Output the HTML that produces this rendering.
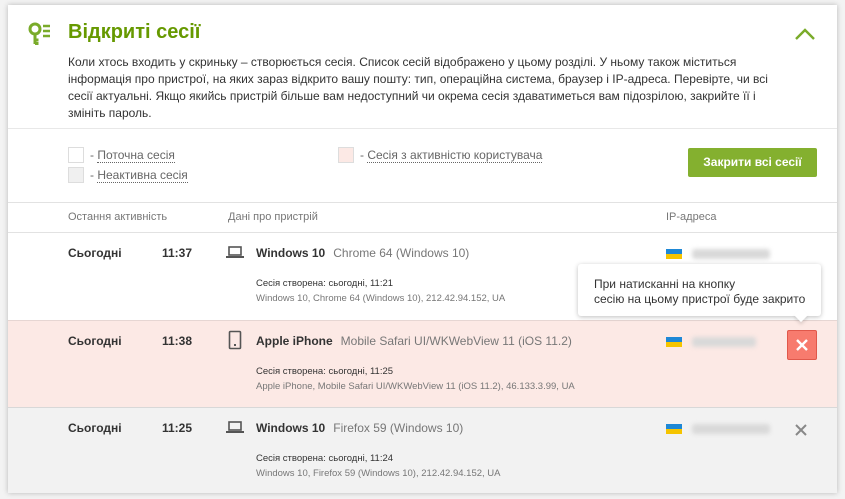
<!DOCTYPE html>
<html><head><meta charset="utf-8"><style>
*{margin:0;padding:0;box-sizing:border-box}
body{width:845px;height:499px;background:#f3f3f3;font-family:"Liberation Sans",Arial,sans-serif;position:relative;overflow:hidden}
.card{position:absolute;left:8px;top:5px;width:829px;height:488px;background:#fff;box-shadow:0 0 5px rgba(0,0,0,.25)}
.a{position:absolute;white-space:nowrap}
.t{font-size:12px;color:#333;line-height:17px}
.row{position:absolute;left:0;width:829px;height:87px}
.dt{font-size:12px;font-weight:bold;color:#333}
.dev{font-size:12px;font-weight:bold;color:#333}
.dev span{font-weight:normal;color:#777;margin-left:8px}
.s1{font-size:9.5px;color:#333}
.s2{font-size:9.5px;color:#777}
.flag{width:16px;height:10px;background:linear-gradient(#1e88d6 50%,#f5c400 50%)}
.ip{width:78px;height:10px;background:#d9d9d9;filter:blur(2px);border-radius:3px}
.leg{font-size:12px;color:#666}
.leg u{text-decoration:none;border-bottom:1px dotted #666}
.box{width:16px;height:16px;border:1px solid #ddd}
</style></head><body>
<div class="card">
<svg class="a" style="left:18px;top:16px" width="28" height="28" viewBox="0 0 28 28"><circle cx="9" cy="8" r="5" fill="none" stroke="#7aab2a" stroke-width="3"/><path d="M9 13v10M9 19h3.5M9 22.5h3.5" stroke="#7aab2a" stroke-width="3" fill="none"/><path d="M17 5h7M17 10h7M17 15h7" stroke="#7aab2a" stroke-width="2.4"/></svg>
<div class="a" style="left:60px;top:16px;font-size:20px;font-weight:bold;color:#669900">Відкриті сесії</div>
<svg class="a" style="left:786px;top:22px" width="22" height="14" viewBox="0 0 22 14"><path d="M2 12L11 3l9 9" stroke="#7aab2a" stroke-width="2.4" fill="none"/></svg>
<div class="a t" style="left:60px;top:49px;white-space:normal;width:700px">Коли хтось входить у скриньку – створюється сесія. Список сесій відображено у цьому розділі. У ньому також міститься інформація про пристрої, на яких зараз відкрито вашу пошту: тип, операційна система, браузер і IP-адреса. Перевірте, чи всі сесії актуальні. Якщо якийсь пристрій більше вам недоступний чи окрема сесія здаватиметься вам підозрілою, закрийте її і змініть пароль.</div>
<div class="a" style="left:0;top:123px;width:829px;height:1px;background:#e8e8e8"></div>
<div class="a box" style="left:60px;top:142px"></div><div class="a leg" style="left:82px;top:143px">- <u>Поточна сесія</u></div>
<div class="a box" style="left:60px;top:162px;background:#f0f0f0"></div><div class="a leg" style="left:82px;top:163px">- <u>Неактивна сесія</u></div>
<div class="a box" style="left:330px;top:142px;background:#fce9e5"></div><div class="a leg" style="left:352px;top:143px">- <u>Сесія з активністю користувача</u></div>
<div class="a" style="left:680px;top:143px;width:129px;height:29px;background:#84b02f;border-radius:2px;color:#fff;font-size:12px;font-weight:bold;text-align:center;line-height:29px">Закрити всі сесії</div>
<div class="a" style="left:0;top:197px;width:829px;height:31px;background:#fff;border-top:1px solid #e2e2e2;border-bottom:1px solid #e2e2e2"></div>
<div class="a" style="left:60px;top:206px;font-size:11px;color:#777">Остання активність</div>
<div class="a" style="left:220px;top:206px;font-size:11px;color:#777">Дані про пристрій</div>
<div class="a" style="left:658px;top:206px;font-size:11px;color:#777">IP-адреса</div>

<div class="row" style="top:228px">
<div class="a dt" style="left:60px;top:13px">Сьогодні</div><div class="a dt" style="left:154px;top:13px">11:37</div>
<svg class="a" style="left:218px;top:12px" width="18" height="14"><rect x="3" y="2" width="12" height="8" fill="none" stroke="#555" stroke-width="1.6"/><path d="M0 12h18" stroke="#555" stroke-width="2"/></svg>
<div class="a dev" style="left:248px;top:13px">Windows 10<span>Chrome 64 (Windows 10)</span></div>
<div class="a s1" style="left:248px;top:45px">Сесія створена: сьогодні, 11:21</div>
<div class="a s2" style="left:248px;top:60px">Windows 10, Chrome 64 (Windows 10), 212.42.94.152, UA</div>
<div class="a flag" style="left:658px;top:16px"></div><div class="a ip" style="left:684px;top:16px"></div>
</div>
<div class="row" style="top:315px;background:#fce9e5;border-top:1px solid #e6d6d3">
<div class="a dt" style="left:60px;top:13px">Сьогодні</div><div class="a dt" style="left:154px;top:13px">11:38</div>
<svg class="a" style="left:220px;top:9px" width="14" height="20"><rect x="1.5" y="1.5" width="11" height="17" rx="1" fill="none" stroke="#555" stroke-width="1.6"/><rect x="6" y="14" width="2" height="2" fill="#555"/></svg>
<div class="a dev" style="left:248px;top:13px">Apple iPhone<span>Mobile Safari UI/WKWebView 11 (iOS 11.2)</span></div>
<div class="a s1" style="left:248px;top:45px">Сесія створена: сьогодні, 11:25</div>
<div class="a s2" style="left:248px;top:60px">Apple iPhone, Mobile Safari UI/WKWebView 11 (iOS 11.2), 46.133.3.99, UA</div>
<div class="a flag" style="left:658px;top:16px"></div><div class="a ip" style="left:684px;top:16px;width:64px"></div>
<div class="a" style="left:779px;top:9px;width:30px;height:30px;background:#f77b6e;border:1px solid #e0584b;border-radius:2px"><svg width="28" height="28"><path d="M9 9l10 10M19 9L9 19" stroke="#fff" stroke-width="2.4"/></svg></div>
</div>
<div class="row" style="top:402px;height:86px;background:#f2f2f2;border-top:1px solid #d8d8d8">
<div class="a dt" style="left:60px;top:13px">Сьогодні</div><div class="a dt" style="left:154px;top:13px">11:25</div>
<svg class="a" style="left:218px;top:12px" width="18" height="14"><rect x="3" y="2" width="12" height="8" fill="none" stroke="#555" stroke-width="1.6"/><path d="M0 12h18" stroke="#555" stroke-width="2"/></svg>
<div class="a dev" style="left:248px;top:13px">Windows 10<span>Firefox 59 (Windows 10)</span></div>
<div class="a s1" style="left:248px;top:45px">Сесія створена: сьогодні, 11:24</div>
<div class="a s2" style="left:248px;top:60px">Windows 10, Firefox 59 (Windows 10), 212.42.94.152, UA</div>
<div class="a flag" style="left:658px;top:16px"></div><div class="a ip" style="left:684px;top:16px"></div>
<svg class="a" style="left:786px;top:15px" width="14" height="14"><path d="M2 2l10 10M12 2L2 12" stroke="#888" stroke-width="2"/></svg>
</div>

<div class="a" style="left:570px;top:259px;width:243px;height:52px;background:#fff;border-radius:3px;box-shadow:0 1px 5px rgba(0,0,0,.25)"></div>
<div class="a" style="left:788px;top:305px;width:10px;height:10px;background:#fff;transform:rotate(45deg);box-shadow:2px 2px 3px rgba(0,0,0,.12)"></div>
<div class="a" style="left:586px;top:272px;font-size:12px;color:#333;line-height:15px">При натисканні на кнопку<br>сесію на цьому пристрої буде закрито</div>
</div>
</body></html>
